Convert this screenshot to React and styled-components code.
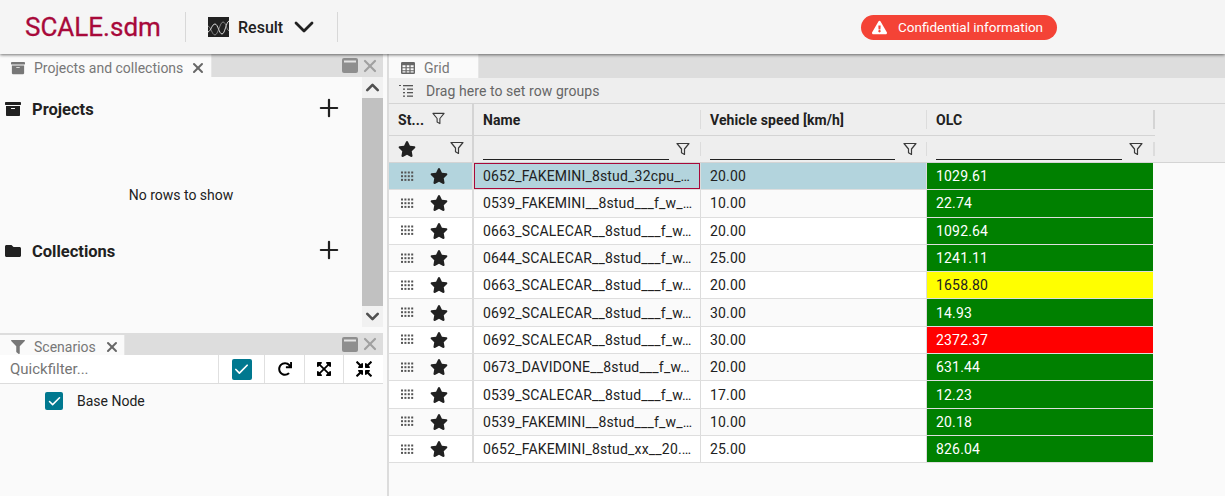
import React from 'react';
import styled, { createGlobalStyle } from 'styled-components';
import {
  FaArchive, FaFolder, FaFilter, FaStar, FaRedo,
  FaExpandArrowsAlt, FaCompressArrowsAlt, FaExclamationTriangle,
} from 'react-icons/fa';
import { Check as CheckMark, ChevronDown, ChevronUp, Plus, X } from 'lucide-react';

const Global = createGlobalStyle`
  html, body { margin: 0; padding: 0; height: 100%; overflow: hidden; background: #fafafa; }
  body { font-family: Roboto, "Liberation Sans", sans-serif; font-size: 14px; color: #212121; }
  * { box-sizing: border-box; }
`;

const Page = styled.div`
  width: 1225px;
  height: 496px;
  display: flex;
  flex-direction: column;
  overflow: hidden;
`;
const Header = styled.header`
  position: relative;
  z-index: 2;
  flex: 0 0 54px;
  height: 54px;
  background: #f5f5f5;
  box-shadow: 0 1px 3px rgba(0, 0, 0, 0.55);
  display: flex;
  align-items: center;
  padding-left: 25px;
`;
const Logo = styled.div`
  width: 160px;
  font-family: Roboto, sans-serif;
  font-size: 26px;
  font-weight: 400;
  line-height: 54px;
  color: #a8093a;
  -webkit-text-stroke: 0.3px #a8093a;
  white-space: nowrap;
`;
const Divider = styled.div`
  width: 1px;
  height: 30px;
  background: #d8d8d8;
`;
const Selector = styled.div`
  width: 151px;
  padding-left: 22px;
  display: flex;
  align-items: center;
  font-size: 16px;
  font-weight: 500;
  color: #212121;
`;
const SelectorLabel = styled.span`
  margin-left: 9px;
  margin-right: 5px;
`;
const Badge = styled.div`
  margin-left: 523px;
  width: 196px;
  height: 25px;
  border-radius: 13px;
  background: #f44336;
  color: #fff;
  display: flex;
  align-items: center;
  padding-left: 11px;
  font-size: 13.5px;
  gap: 11px;
`;
const Body = styled.div`
  flex: 1;
  min-height: 0;
  display: flex;
`;
const LeftColumn = styled.div`
  width: 383px;
  display: flex;
  flex-direction: column;
`;
const Gutter = styled.div`
  width: 5px;
  background: #fafafa;
  border-right: 1px solid #dcdcdc;
`;
const RightColumn = styled.div`
  flex: 1;
  min-width: 0;
  display: flex;
  flex-direction: column;
  background: #fafafa;
`;
const TabBar = styled.div`
  flex: 0 0 ${(p) => p.$h}px;
  height: ${(p) => p.$h}px;
  background: #dddddd;
  display: flex;
  align-items: stretch;
  padding-left: ${(p) => p.$inset || 0}px;
`;
const Tab = styled.div`
  width: ${(p) => p.$w}px;
  background: #fafafa;
  border-right: 1px solid #e6e6e6;
  display: flex;
  align-items: center;
  color: #777;
  font-size: 14px;
  padding-left: ${(p) => p.$pad}px;
  padding-top: 4px;
  margin-top: ${(p) => p.$top || 0}px;
`;
const TabText = styled.span`
  margin-left: ${(p) => p.$gap}px;
`;
const TabClose = styled.span`
  margin-left: ${(p) => p.$gap}px;
  display: flex;
  color: #666;
`;
const TabTools = styled.div`
  margin-left: auto;
  display: flex;
  align-items: center;
  gap: 2px;
  padding-right: 3px;
  color: #a0a0a0;
`;
const Projects = styled.div`
  flex: 0 0 250px;
  display: flex;
  background: #fafafa;
`;
const ProjectsContent = styled.div`
  flex: 1;
  display: flex;
  flex-direction: column;
`;
const SectionHead = styled.div`
  display: flex;
  align-items: center;
  height: 22px;
  padding-left: 5px;
  padding-right: 19px;
  margin-top: ${(p) => p.$top}px;
  font-size: 16.5px;
  font-weight: 700;
  color: #212121;
`;
const SectionTitle = styled.span`
  margin-left: 11px;
  flex: 1;
`;
const PlusWrap = styled.span`
  display: flex;
  margin-top: -3px;
`;
const NoRows = styled.div`
  text-align: center;
  height: 16px;
  line-height: 16px;
  margin-top: ${(p) => p.$top}px;
  font-size: 14px;
  color: #212121;
`;
const Scrollbar = styled.div`
  width: 21px;
  display: flex;
  flex-direction: column;
  background: #f1f1f1;
`;
const ScrollBtn = styled.div`
  flex: 0 0 21px;
  display: flex;
  align-items: center;
  justify-content: center;
  color: #505050;
`;
const ScrollThumb = styled.div`
  flex: 1;
  background: #c1c1c1;
`;
const HGutter = styled.div`
  flex: 0 0 6px;
  background: #fafafa;
`;
const Scenarios = styled.div`
  flex: 1;
  display: flex;
  flex-direction: column;
  background: #fafafa;
`;
const FilterBar = styled.div`
  flex: 0 0 29px;
  display: flex;
  align-items: stretch;
  background: #fff;
  border-bottom: 1px solid #dcdcdc;
`;
const QuickFilter = styled.div`
  flex: 1;
  padding-left: 10px;
  display: flex;
  align-items: center;
  font-size: 15px;
  color: #757575;
`;
const ToolCell = styled.div`
  width: ${(p) => p.$w}px;
  border-left: 1px solid #e0e0e0;
  display: flex;
  align-items: center;
  justify-content: center;
  color: #000;
`;
const Check = styled.div`
  width: ${(p) => p.$s}px;
  height: ${(p) => p.$t || p.$s}px;
  border-radius: 2px;
  background: #00788f;
  color: #fff;
  display: flex;
  align-items: center;
  justify-content: center;
`;
const TreeRow = styled.div`
  display: flex;
  align-items: center;
  padding: 8px 0 0 45px;
  gap: 14px;
  font-size: 14px;
`;
const GroupPanel = styled.div`
  flex: 0 0 26px;
  background: #eeeeee;
  border-left: 1px solid #dcdcdc;
  border-bottom: 1px solid #d4d4d4;
  display: flex;
  align-items: center;
  padding-left: 9px;
  gap: 12px;
  color: #666;
  font-size: 14px;
  letter-spacing: 0.07px;
`;
const Grid = styled.div`
  display: flex;
  flex-direction: column;
  border-left: 1px solid #dcdcdc;
  flex: 1;
`;
const COLS = '83px 2px 226px 1px 225px 1px 226px';
const HeadBlock = styled.div`
  flex: 0 0 59px;
  background: #eeeeee;
  border-bottom: 1px solid #d4d4d4;
`;
const HeadRow = styled.div`
  display: grid;
  grid-template-columns: ${COLS} 2px;
  width: 766px;
  height: ${(p) => p.$h}px;
  border-bottom: ${(p) => (p.$line ? '1px solid #d4d4d4' : 'none')};
  font-weight: 700;
  letter-spacing: 0.1px;
  color: #212121;
`;
const HeadCell = styled.div`
  display: flex;
  align-items: center;
  padding-left: ${(p) => p.$pad ?? 9}px;
  position: relative;
  min-width: 0;
`;
const Sep = styled.div`
  background: ${(p) => (p.$strong ? '#d4d4d4' : '#dcdcdc')};
  margin: ${(p) => p.$m ?? 6}px 0;
`;
const StatusHead = styled.span`
  width: 25px;
  margin-right: 6px;
  font-size: 14px;
`;
const Underline = styled.div`
  width: ${(p) => p.$w}px;
  height: 16px;
  margin-top: 5px;
  border-bottom: 1px solid #212121;
`;
const FilterGlyph = styled.span`
  position: absolute;
  right: ${(p) => p.$r}px;
  top: ${(p) => p.$t}px;
  display: flex;
  color: #3a3a3a;
`;
const Row = styled.div`
  display: grid;
  grid-template-columns: ${COLS};
  width: 764px;
  height: 27.3px;
  flex: 0 0 27.3px;
  background: ${(p) => (p.$selected ? '#b3d4dd' : p.$alt ? '#fafafa' : '#ffffff')};
  border-bottom: 1px solid #dedede;
`;
const Cell = styled.div`
  display: flex;
  align-items: center;
  padding-left: 9px;
  font-size: 14px;
  letter-spacing: 0.18px;
  min-width: 0;
  white-space: nowrap;
  background: ${(p) => p.$bg || 'transparent'};
  color: ${(p) => p.$fg || '#212121'};
  box-shadow: ${(p) => (p.$focus ? 'inset 0 0 0 1px #a8093a' : 'none')};
`;
const PinnedCell = styled.div`
  display: flex;
  align-items: center;
  padding-left: 12px;
  gap: 16px;
`;

const Funnel = ({ size = 14 }) => (
  <svg width={size} height={size} viewBox="0 0 14 14" fill="none" stroke="currentColor" strokeWidth="1.2" strokeLinejoin="round">
    <path d="M1 1.5h12L8.5 7v5.5l-3-1.8V7z" />
  </svg>
);
const Grip = () => (
  <svg width="13" height="11" viewBox="0 0 13 11" fill="#555">
    {[0, 1, 2].map((r) =>
      [0, 1, 2, 3].map((c) => <rect key={`${r}${c}`} x={c * 3.4} y={r * 3.7 + 0.5} width="2" height="2" />)
    )}
  </svg>
);
const GroupIcon = () => (
  <svg width="16" height="12" viewBox="0 0 16 12" fill="#555">
    <rect x="1" y="0" width="2" height="1" />
    <rect x="5" y="0" width="10" height="1.3" />
    <rect x="5" y="3.5" width="2" height="1.3" /><rect x="9" y="3.5" width="6" height="1.3" />
    <rect x="5" y="7" width="2" height="1.3" /><rect x="9" y="7" width="6" height="1.3" />
    <rect x="5" y="10.5" width="2" height="1.3" /><rect x="9" y="10.5" width="6" height="1.3" />
  </svg>
);
const GridIcon = () => (
  <svg width="14" height="12" viewBox="0 0 14 12" fill="#666">
    <path d="M1.2 0h11.6A1.2 1.2 0 0 1 14 1.2v9.6a1.2 1.2 0 0 1-1.2 1.2H1.2A1.2 1.2 0 0 1 0 10.800V1.2A1.2 1.2 0 0 1 1.200 0zM1.500 3.200v2h3v-2zm4.200 0v2h2.700v-2zm3.900 0v2h3v-2zM1.500 6.300v1.900h3V6.300zm4.200 0v1.900h2.700V6.300zm3.900 0v1.900h3V6.300zM1.500 9.300v1.300h3V9.300zm4.200 0v1.300h2.700V9.300zm3.900 0v1.300h3V9.300z" fillRule="evenodd" />
  </svg>
);
const ChartIcon = () => (
  <svg width="21" height="20" viewBox="0 0 21 20">
    <rect width="21" height="20" fill="#212121" />
    <path d="M0 15c3-1 4-8 7-8s4 10 7 10 4-12 7-13" fill="none" stroke="#eee" strokeWidth="0.9" />
    <path d="M0 9c3 1 4 9 7 9s5-13 8-13 3 7 6 9" fill="none" stroke="#aaa" strokeWidth="0.7" />
  </svg>
);
const MaxIcon = () => (
  <svg width="16" height="15" viewBox="0 0 16 15">
    <rect width="16" height="15" rx="2" fill="#8e8e8e" />
    <rect x="2" y="2.500" width="12" height="2" fill="#e4e4e4" />
  </svg>
);
const PaneTools = () => (
  <TabTools>
    <MaxIcon />
    <X size={20} strokeWidth={2.6} />
  </TabTools>
);

const rows = [
  ['0652_FAKEMINI_8stud_32cpu_…', '20.00', '1029.61', 'g'],
  ['0539_FAKEMINI__8stud___f_w_…', '10.00', '22.74', 'g'],
  ['0663_SCALECAR__8stud___f_w…', '20.00', '1092.64', 'g'],
  ['0644_SCALECAR__8stud___f_w…', '25.00', '1241.11', 'g'],
  ['0663_SCALECAR__8stud___f_w…', '20.00', '1658.80', 'y'],
  ['0692_SCALECAR__8stud___f_w…', '30.00', '14.93', 'g'],
  ['0692_SCALECAR__8stud___f_w…', '30.00', '2372.37', 'r'],
  ['0673_DAVIDONE__8stud___f_w…', '20.00', '631.44', 'g'],
  ['0539_SCALECAR__8stud___f_w…', '17.00', '12.23', 'g'],
  ['0539_FAKEMINI__8stud___f_w_…', '10.00', '20.18', 'g'],
  ['0652_FAKEMINI_8stud_xx__20.…', '25.00', '826.04', 'g'],
];
const tone = {
  g: { bg: '#008000', fg: '#fff' },
  y: { bg: '#ffff00', fg: '#212121' },
  r: { bg: '#ff0000', fg: '#fff' },
};

export default function App() {
  return (
    <Page>
      <Global />
      <Header>
        <Logo>SCALE.sdm</Logo>
        <Divider />
        <Selector>
          <ChartIcon />
          <SelectorLabel>Result</SelectorLabel>
          <ChevronDown size={32} strokeWidth={2.1} />
        </Selector>
        <Divider />
        <Badge>
          <FaExclamationTriangle size={15} />
          <span>Confidential information</span>
        </Badge>
      </Header>
      <Body>
        <LeftColumn>
          <TabBar $h={23}>
            <Tab $w={212} $pad={11}>
              <FaArchive size={14} />
              <TabText $gap={9}>Projects and collections</TabText>
              <TabClose $gap={7}><X size={16} strokeWidth={3} /></TabClose>
            </Tab>
            <PaneTools />
          </TabBar>
          <Projects>
            <ProjectsContent>
              <SectionHead $top={21}>
                <FaArchive size={16} />
                <SectionTitle>Projects</SectionTitle>
                <PlusWrap><Plus size={28} strokeWidth={1.9} /></PlusWrap>
              </SectionHead>
              <NoRows $top={67}>No rows to show</NoRows>
              <SectionHead $top={37}>
                <FaFolder size={16} />
                <SectionTitle>Collections</SectionTitle>
                <PlusWrap><Plus size={28} strokeWidth={1.9} /></PlusWrap>
              </SectionHead>
            </ProjectsContent>
            <Scrollbar>
              <ScrollBtn><ChevronUp size={21} strokeWidth={3} /></ScrollBtn>
              <ScrollThumb />
              <ScrollBtn><ChevronDown size={21} strokeWidth={3} /></ScrollBtn>
            </Scrollbar>
          </Projects>
          <HGutter />
          <Scenarios>
            <TabBar $h={22}>
              <Tab $w={125} $pad={11} $top={2}>
                <FaFilter size={14} />
                <TabText $gap={9}>Scenarios</TabText>
                <TabClose $gap={8}><X size={16} strokeWidth={3} /></TabClose>
              </Tab>
              <PaneTools />
            </TabBar>
            <FilterBar>
              <QuickFilter>Quickfilter...</QuickFilter>
              <ToolCell $w={46}><Check $s={20} $t={21}><CheckMark size={17} strokeWidth={2.4} /></Check></ToolCell>
              <ToolCell $w={40}><FaRedo size={14} /></ToolCell>
              <ToolCell $w={39}><FaExpandArrowsAlt size={16} /></ToolCell>
              <ToolCell $w={40}><FaCompressArrowsAlt size={16} /></ToolCell>
            </FilterBar>
            <TreeRow>
              <Check $s={18}><CheckMark size={15} strokeWidth={2.4} /></Check>
              <span>Base Node</span>
            </TreeRow>
          </Scenarios>
        </LeftColumn>
        <Gutter />
        <RightColumn>
          <TabBar $h={24} $inset={1}>
            <Tab $w={90} $pad={12}>
              <GridIcon />
              <TabText $gap={9}>Grid</TabText>
            </Tab>
          </TabBar>
          <GroupPanel>
            <GroupIcon />
            <span>Drag here to set row groups</span>
          </GroupPanel>
          <Grid>
            <HeadBlock>
              <HeadRow $h={32} $line>
                <HeadCell>
                  <StatusHead>St...</StatusHead>
                  <FilterGlyph $r={27} $t={8}><Funnel size={13} /></FilterGlyph>
                </HeadCell>
                <Sep $m={0} $strong />
                <HeadCell>Name</HeadCell>
                <Sep />
                <HeadCell>Vehicle speed [km/h]</HeadCell>
                <Sep />
                <HeadCell>OLC</HeadCell>
                <Sep $strong />
              </HeadRow>
              <HeadRow $h={26}>
                <HeadCell>
                  <FaStar size={18} />
                  <FilterGlyph $r={8} $t={5}><Funnel size={14} /></FilterGlyph>
                </HeadCell>
                <Sep $m={0} $strong />
                <HeadCell><Underline $w={186} /><FilterGlyph $r={10} $t={6}><Funnel size={14} /></FilterGlyph></HeadCell>
                <Sep />
                <HeadCell><Underline $w={185} /><FilterGlyph $r={9} $t={6}><Funnel size={14} /></FilterGlyph></HeadCell>
                <Sep />
                <HeadCell><Underline $w={186} /><FilterGlyph $r={10} $t={6}><Funnel size={14} /></FilterGlyph></HeadCell>
                <Sep />
              </HeadRow>
            </HeadBlock>
            {rows.map(([name, speed, olc, t], i) => (
              <Row key={i} $selected={i === 0} $alt={i % 2 === 1}>
                <PinnedCell><Grip /><FaStar size={18} /></PinnedCell>
                <Sep $m={0} />
                <Cell $focus={i === 0}>{name}</Cell>
                <Sep $m={0} />
                <Cell>{speed}</Cell>
                <Sep $m={0} />
                <Cell $bg={tone[t].bg} $fg={tone[t].fg}>{olc}</Cell>
              </Row>
            ))}
          </Grid>
        </RightColumn>
      </Body>
    </Page>
  );
}
